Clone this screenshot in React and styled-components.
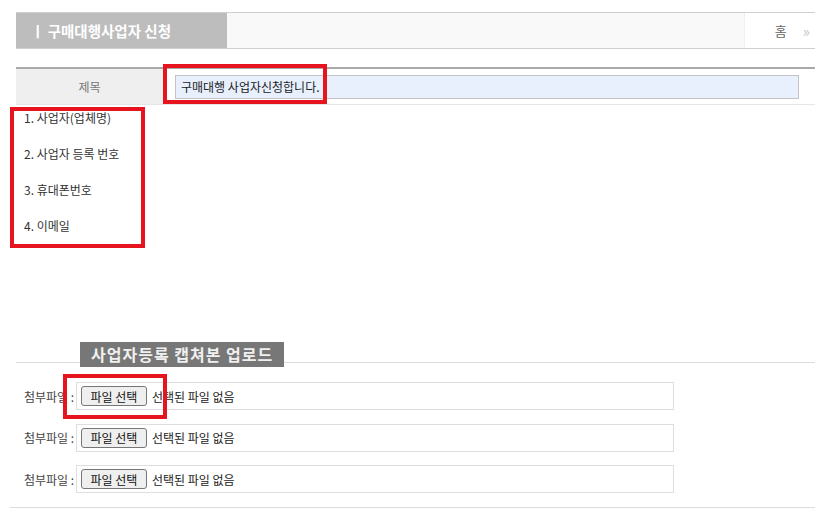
import styled, { createGlobalStyle } from "styled-components";

const GlobalStyle = createGlobalStyle`
  body {
    margin: 0;
    background: #fff;
    font-family: "Noto Sans CJK KR", "Noto Sans", sans-serif;
    color: #333;
  }
`;

const items = ["1. 사업자(업체명)", "2. 사업자 등록 번호", "3. 휴대폰번호", "4. 이메일"];

const App = () => {
  return (
    <Page>
      <GlobalStyle />
      <Header>
        <HeaderTitle>ㅣ 구매대행사업자 신청</HeaderTitle>
        <HeaderFill />
        <HeaderNav>
          <span>홈</span>
          <NavArrow>»</NavArrow>
        </HeaderNav>
      </Header>

      <TitleRow>
        <Label>제목</Label>
        <ValueCell>
          <TitleInput>구매대행 사업자신청합니다.</TitleInput>
          <Mark $left={0} $top={-5} $width={164} $height={40} />
        </ValueCell>
      </TitleRow>

      <List>
        {items.map((item) => (
          <ListItem key={item}>{item}</ListItem>
        ))}
        <Mark $left={-6} $top={7} $width={135} $height={141} />
      </List>

      <UploadHead>
        <Badge>사업자등록 캡쳐본 업로드</Badge>
      </UploadHead>

      <Files>
        {[0, 1, 2].map((i) => (
          <FileRow key={i}>
            <FileLabel>첨부파일 :</FileLabel>
            <FileBox>
              <FileButton>파일 선택</FileButton>
              <FileText>선택된 파일 없음</FileText>
              {i === 0 && <Mark $left={-14} $top={-9} $width={104} $height={45} />}
            </FileBox>
          </FileRow>
        ))}
      </Files>

      <BottomLine />
    </Page>
  );
};

// 빨간 표시 박스
const Mark = styled.div`
  position: absolute;
  left: ${(p) => p.$left}px;
  top: ${(p) => p.$top}px;
  width: ${(p) => p.$width}px;
  height: ${(p) => p.$height}px;
  border: 4px solid #e5141f;
  box-sizing: border-box;
  pointer-events: none;
`;

const Page = styled.div`
  width: 815px;
  padding-top: 12px;
`;

const Header = styled.div`
  display: flex;
  margin-left: 16px;
  height: 35px;
  border-top: 1px solid #d0d0d0;
  border-bottom: 1px solid #d0d0d0;
`;

const HeaderTitle = styled.div`
  width: 211px;
  background: #bdbdbd;
  color: #fff;
  font-size: 14.5px;
  font-weight: 700;
  display: flex;
  align-items: center;
  padding-left: 15px;
  box-sizing: border-box;
`;

const HeaderFill = styled.div`
  flex: 1;
  background: repeating-linear-gradient(#f7f7f7 0 1px, #fafafa 1px 2px);
  border-right: 1px dotted #e6e6e6;
`;

const HeaderNav = styled.div`
  width: 70px;
  display: flex;
  align-items: center;
  justify-content: flex-end;
  gap: 16px;
  padding-right: 5px;
  box-sizing: border-box;
  font-size: 13px;
  color: #666;
`;

const NavArrow = styled.span`
  color: #c4c4c4;
  font-size: 15px;
`;

const TitleRow = styled.div`
  display: flex;
  margin-top: 18px;
  margin-left: 16px;
  height: 35px;
  border-top: 2px solid #a9a9a9;
  border-bottom: 1px solid #e6e6e6;
`;

const Label = styled.div`
  width: 147px;
  background: #efefef;
  display: flex;
  align-items: center;
  justify-content: center;
  font-size: 12px;
  color: #777;
`;

const ValueCell = styled.div`
  position: relative;
  display: flex;
  align-items: center;
  padding-left: 12px;
`;

const TitleInput = styled.div`
  width: 624px;
  height: 24px;
  box-sizing: border-box;
  border: 1px solid #c3c3c3;
  background: #e8f0fe;
  font-size: 12px;
  color: #222;
  display: flex;
  align-items: center;
  padding-left: 5px;
`;

const List = styled.div`
  position: relative;
  margin-left: 16px;
  margin-top: -5px;
`;

const ListItem = styled.div`
  height: 36px;
  line-height: 36px;
  padding-left: 8px;
  font-size: 12px;
  color: #333;
`;

const UploadHead = styled.div`
  margin-top: 98px;
  margin-left: 16px;
  height: 20px;
  border-bottom: 1px solid #dcdcdc;
`;

const Badge = styled.div`
  display: inline-block;
  margin-left: 64px;
  height: 25px;
  line-height: 25px;
  padding: 0 11px;
  background: #777;
  color: #f0f0f0;
  font-size: 16px;
  font-weight: 700;
  letter-spacing: 1px;
`;

const Files = styled.div`
  margin-top: 19px;
  margin-left: 24px;
  display: flex;
  flex-direction: column;
  gap: 13.5px;
`;

const FileRow = styled.div`
  display: flex;
  align-items: center;
`;

const FileLabel = styled.div`
  width: 52px;
  font-size: 12px;
  color: #444;
`;

const FileBox = styled.div`
  position: relative;
  width: 598px;
  height: 28px;
  box-sizing: border-box;
  border: 1px solid #dedede;
  display: flex;
  align-items: center;
  padding-left: 4px;
`;

const FileButton = styled.div`
  height: 20px;
  width: 66px;
  box-sizing: border-box;
  border: 1px solid #767676;
  border-radius: 3px;
  background: #efefef;
  font-size: 12px;
  color: #111;
  display: flex;
  align-items: center;
  justify-content: center;
`;

const FileText = styled.span`
  margin-left: 5px;
  font-size: 12px;
  color: #222;
`;

const BottomLine = styled.div`
  margin-top: 14px;
  margin-left: 10px;
  border-top: 1px solid #dcdcdc;
`;

export default App;
